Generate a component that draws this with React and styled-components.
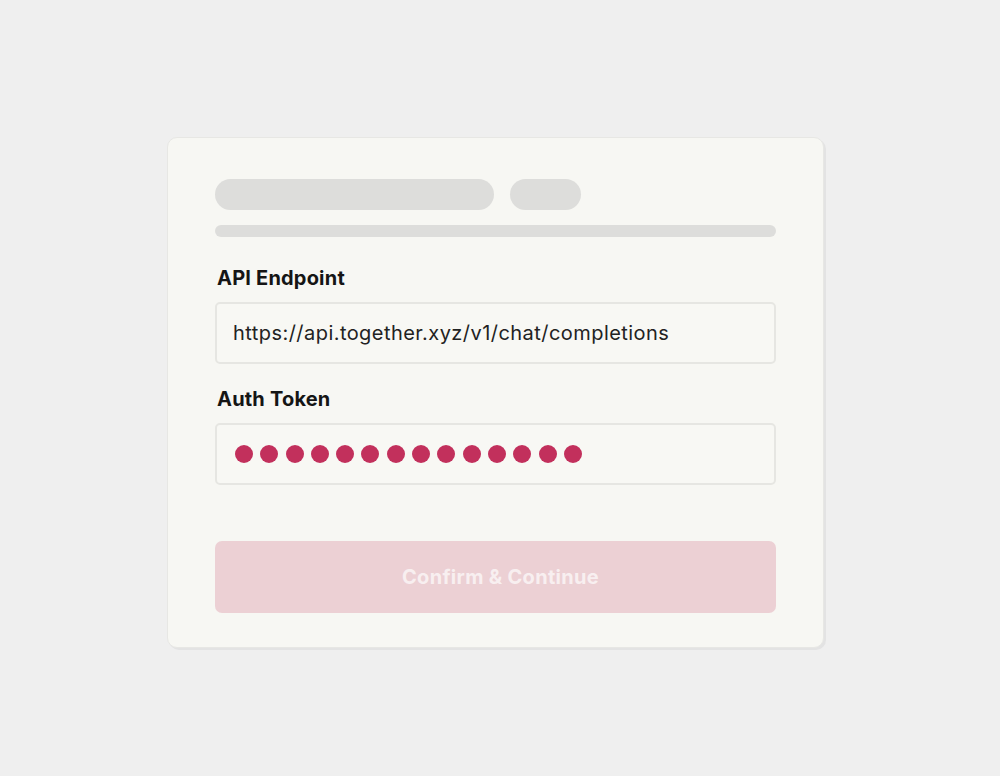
import React from "react";
import styled, { createGlobalStyle } from "styled-components";

const GlobalStyle = createGlobalStyle`
    html, body {
        margin: 0;
        padding: 0;
        background: #efefef;
        font-family: Inter, "Liberation Sans", sans-serif;
    }
`;

const Page = styled.main`
    min-height: 776px;
    display: flex;
    align-items: flex-start;
    padding: 137px 0 0 167px;
    box-sizing: border-box;
`;

const Card = styled.section`
    width: 657px;
    height: 511px;
    box-sizing: border-box;
    background: #f7f7f3;
    border: 1.5px solid #e7e7e4;
    border-radius: 10px;
    box-shadow: 2px 2px 0 #e3e3e3;
    padding: 41px 47px 0 47px;
    display: flex;
    flex-direction: column;
`;

const SkeletonRow = styled.div`
    display: flex;
    gap: 16px;
`;

const Pill = styled.div`
    width: ${(p) => p.$w}px;
    height: 31px;
    border-radius: 16px;
    background: #dddddb;
`;

const Bar = styled.div`
    height: 12px;
    border-radius: 6px;
    background: #dddddb;
    margin-top: 15px;
`;

const Label = styled.label`
    display: block;
    font-size: 20px;
    font-weight: 700;
    letter-spacing: 0.2px;
    color: #151515;
    margin: ${(p) => p.$top}px 0 0 2px;
    line-height: 24px;
`;

const Field = styled.div`
    height: 62px;
    box-sizing: border-box;
    margin-top: ${(p) => p.$top}px;
    border: 2px solid #e6e6e2;
    border-radius: 5px;
    background: #f8f8f4;
    display: flex;
    align-items: center;
    padding-left: 16px;
    font-size: 20px;
    letter-spacing: 0.45px;
    color: #222;
`;

const Dots = styled.div`
    display: flex;
    gap: 7.3px;
    padding-left: 2px;
`;

const Dot = styled.span`
    width: 18px;
    height: 18px;
    border-radius: 50%;
    background: #c2305c;
`;

const Button = styled.button`
    margin-top: 56px;
    height: 72px;
    padding: 0 0 0 10px;
    border: none;
    border-radius: 7px;
    background: #ecd0d4;
    color: #f8eff0;
    font-family: Inter, "Liberation Sans", sans-serif;
    font-size: 20px;
    font-weight: 700;
    letter-spacing: 0.3px;
    cursor: not-allowed;
`;

export default function App() {
    return (
        <>
            <GlobalStyle />
            <Page>
                <Card>
                    <SkeletonRow>
                        <Pill $w={279} />
                        <Pill $w={71} />
                    </SkeletonRow>
                    <Bar />
                    <Label $top={29}>API Endpoint</Label>
                    <Field $top={12}>https://api.together.xyz/v1/chat/completions</Field>
                    <Label $top={23}>Auth Token</Label>
                    <Field $top={12}>
                        <Dots>
                            {Array.from({ length: 14 }).map((_, i) => (
                                <Dot key={i} />
                            ))}
                        </Dots>
                    </Field>
                    <Button disabled>Confirm &amp; Continue</Button>
                </Card>
            </Page>
        </>
    );
}
